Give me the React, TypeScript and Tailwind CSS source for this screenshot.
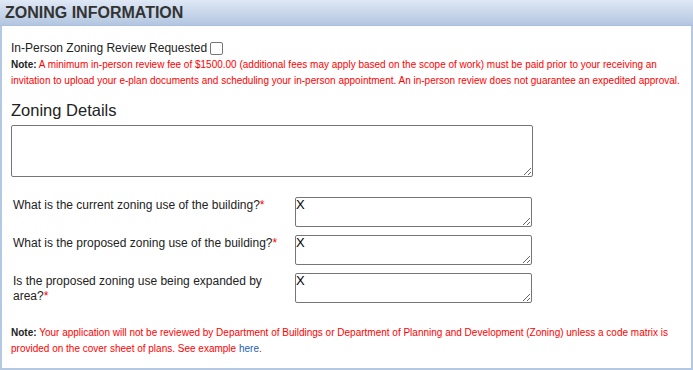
import React from 'react';

const questions = [
  'What is the current zoning use of the building?',
  'What is the proposed zoning use of the building?',
  'Is the proposed zoning use being expanded by area?',
];

const App: React.FC = () => {
  return (
    <div className="w-[693px] h-[370px] bg-white font-['Liberation_Sans',Arial,sans-serif] text-[#222] flex flex-col">
      {/* Header */}
      <div className="h-[26px] shrink-0 bg-gradient-to-b from-[#dfe8f5] to-[#b3c6e0] border-b border-[#a9bfdd] px-[5px] flex items-center">
        <h2 className="text-[16px] font-bold text-[#333] leading-none">ZONING INFORMATION</h2>
      </div>

      {/* Body */}
      <div className="flex-1 border-x-2 border-b-2 border-[#b4c8e4] pl-[9px] pr-2 pt-[14px]">
        <label className="flex items-center text-[12px] leading-[16px] text-[#222]">
          In-Person Zoning Review Requested
          <input type="checkbox" className="ml-[3px] w-[13px] h-[13px] appearance-none border border-[#767676] rounded-[2px] bg-white" />
        </label>
        <p className="mt-[1px] text-[10px] leading-[16px] text-[#ff0000]">
          <span className="font-bold text-[#222]">Note:</span> A minimum in-person review fee of $1500.00 (additional fees may apply based on the scope of work) must be paid prior to your receiving an invitation to upload your e-plan documents and scheduling your in-person appointment. An in-person review does not guarantee an expedited approval.
        </p>

        <h3 className="mt-[10px] text-[16.5px] leading-[22px] text-[#222]">Zoning Details</h3>
        <textarea className="mt-[4px] block w-[522px] h-[52px] border border-[#767676] rounded-[2px] resize-y bg-white" />

        <div className="mt-[20px] flex flex-col gap-[8px]">
          {questions.map((q) => (
            <div key={q} className="flex items-start">
              <div className="w-[284px] pl-[2px] pr-[2px] pt-[1px] text-[12px] leading-[15px] text-[#222]">
                {q}
                <span className="text-[#ff0000]">*</span>
              </div>
              <textarea
                defaultValue="X"
                className="block w-[237px] h-[30px] border border-[#767676] rounded-[2px] text-[13px] leading-[14px] font-['Liberation_Sans',Arial,sans-serif] text-black p-0 resize-y"
              />
            </div>
          ))}
        </div>

        <p className="mt-[21px] text-[10px] leading-[16px] text-[#ff0000]">
          <span className="font-bold text-[#222]">Note:</span> Your application will not be reviewed by Department of Buildings or Department of Planning and Development (Zoning) unless a code matrix is provided on the cover sheet of plans. See example <a className="text-[#1a5fb4]">here</a>.
        </p>
      </div>
    </div>
  );
};

export default App;
